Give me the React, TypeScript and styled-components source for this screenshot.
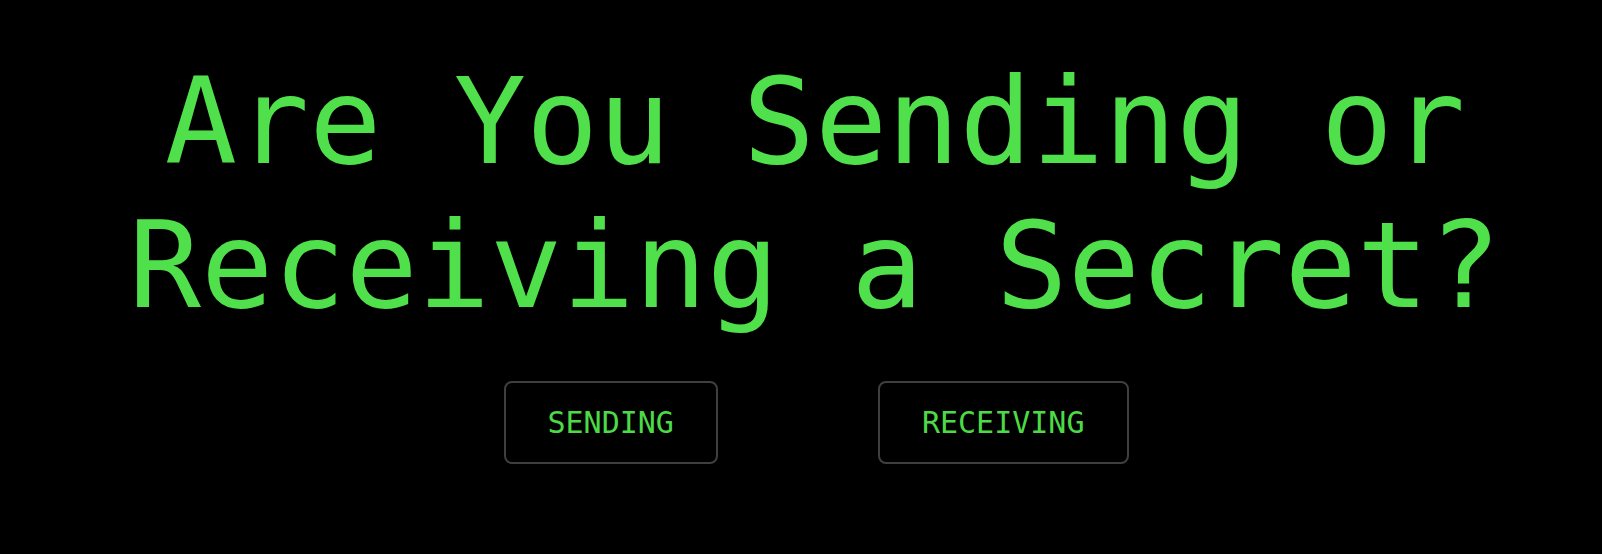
import React from "react";
import styled, { createGlobalStyle } from "styled-components";

const GlobalStyle = createGlobalStyle`
  html, body {
    margin: 0;
    padding: 0;
    background: #000;
  }
  body {
    font-family: "DejaVu Sans Mono", "Liberation Mono", monospace;
  }
`;

const Page = styled.main`
  min-height: 554px;
  box-sizing: border-box;
  background: #000;
  display: flex;
  flex-direction: column;
  align-items: center;
  padding: 50px 0 0 28px;
  gap: 43px;
`;

const Title = styled.h1`
  margin: 0;
  font-family: "DejaVu Sans Mono", monospace;
  font-weight: normal;
  font-size: 120px;
  line-height: 144px;
  color: #50e04b;
  text-align: center;
`;

const ButtonRow = styled.div`
  display: flex;
  gap: 160px;
  padding-left: 2px;
`;

const ChoiceButton = styled.button`
  box-sizing: border-box;
  height: 83px;
  padding: 0 42px;
  background: #000;
  border: 2px solid #3f3f3f;
  border-radius: 8px;
  font-family: "DejaVu Sans Mono", monospace;
  font-size: 30px;
  line-height: 36px;
  color: #4cdb47;
  cursor: pointer;
`;

export default function App() {
  return (
    <>
      <GlobalStyle />
      <Page>
        <Title>
          Are You Sending or
          <br />
          Receiving a Secret?
        </Title>
        <ButtonRow>
          <ChoiceButton>SENDING</ChoiceButton>
          <ChoiceButton>RECEIVING</ChoiceButton>
        </ButtonRow>
      </Page>
    </>
  );
}
